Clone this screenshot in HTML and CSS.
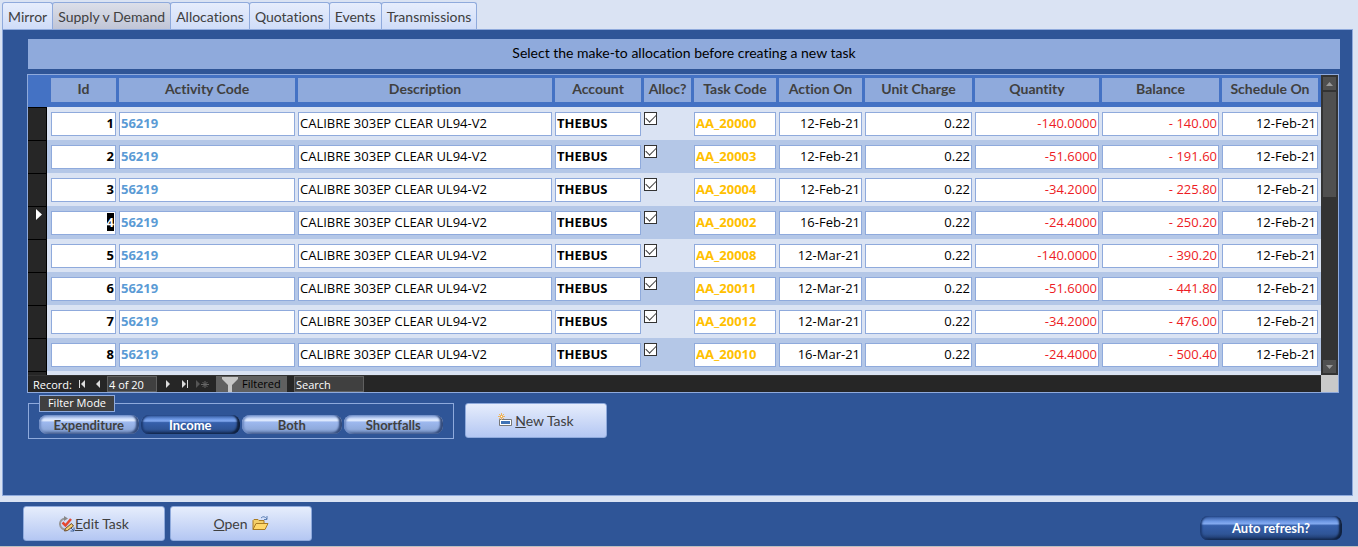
FILE: index.html
```html
<!DOCTYPE html>
<html lang="en">
<head>
<meta charset="utf-8">
<title>Supply v Demand</title>
<link rel="stylesheet" href="styles.css">
</head>
<body>
<main class="workspace">
  <nav class="tabs" role="tablist">
    <button class="tab" role="tab">Mirror</button>
    <button class="tab tab-active" role="tab" aria-selected="true">Supply v Demand</button>
    <button class="tab" role="tab">Allocations</button>
    <button class="tab" role="tab">Quotations</button>
    <button class="tab" role="tab">Events</button>
    <button class="tab" role="tab">Transmissions</button>
  </nav>
  <section class="page">
    <div class="banner">Select the make-to allocation before creating a new task</div>
    <div class="subform">
      <div class="grid-area">
        <div class="grid-view">
          <table class="grid">
            <colgroup>
              <col class="c-sel"><col class="c-id"><col class="c-act"><col class="c-desc"><col class="c-acc"><col class="c-alloc"><col class="c-task"><col class="c-date"><col class="c-unit"><col class="c-qty"><col class="c-bal"><col class="c-sched">
            </colgroup>
            <thead>
              <tr>
                <td></td>
                <th><span>Id</span></th>
                <th><span>Activity Code</span></th>
                <th><span>Description</span></th>
                <th><span>Account</span></th>
                <th><span>Alloc?</span></th>
                <th><span>Task Code</span></th>
                <th><span>Action On</span></th>
                <th><span>Unit Charge</span></th>
                <th><span>Quantity</span></th>
                <th><span>Balance</span></th>
                <th><span>Schedule On</span></th>
              </tr>
            </thead>
            <tbody id="rows"></tbody>
          </table>
        </div>
        <div class="scrollbar">
          <button class="scroll-btn" aria-label="Scroll up"><svg width="7" height="4" viewBox="0 0 7 4"><path d="M0 4 3.5 0 7 4z" fill="#999"/></svg></button>
          <div class="scroll-thumb"></div>
          <button class="scroll-btn scroll-down" aria-label="Scroll down"><svg width="7" height="4" viewBox="0 0 7 4"><path d="M0 0 3.5 4 7 0z" fill="#999"/></svg></button>
        </div>
      </div>
      <div class="record-bar">
        <div class="record-nav">
          <label class="record-label" for="record">Record:</label>
          <button class="nav-btn" aria-label="First record"><svg width="8" height="8" viewBox="0 0 8 8"><path d="M1 0h1v8H1zM7 0 3 4l4 4z" fill="#ddd"/></svg></button>
          <button class="nav-btn nav-prev" aria-label="Previous record"><svg width="5" height="8" viewBox="0 0 5 8"><path d="M4 0v8L0 4z" fill="#ddd"/></svg></button>
          <input class="record-input" id="record" value="4 of 20">
          <button class="nav-btn nav-next" aria-label="Next record"><svg width="5" height="8" viewBox="0 0 5 8"><path d="M0 0v8l4-4z" fill="#ddd"/></svg></button>
          <button class="nav-btn nav-last" aria-label="Last record"><svg width="8" height="8" viewBox="0 0 8 8"><path d="M0 0v8l4-4zM5 0h1v8H5z" fill="#ddd"/></svg></button>
          <button class="nav-btn nav-new" aria-label="New record"><svg width="13" height="9" viewBox="0 0 13 9"><path d="M0 0v8l4-4z" fill="#555"/><path d="M9 1v7M5 4.500h8M6.500 2l5 5M11.500 2l-5 5" stroke="#666" fill="none"/></svg></button>
          <button class="filtered"><svg width="16" height="15" viewBox="0 0 16 15"><path d="M0 0h16v2l-6 6v7H6V8L0 2z" fill="#c6c6c6"/></svg><span>Filtered</span></button>
          <input class="search" aria-label="Search" value="Search">
        </div>
        <div class="corner"></div>
      </div>
    </div>
    <div class="controls">
      <fieldset class="filter">
        <legend>Filter Mode</legend>
        <button class="pill">Expenditure</button>
        <button class="pill pill-dark" aria-pressed="true">Income</button>
        <button class="pill">Both</button>
        <button class="pill">Shortfalls</button>
      </fieldset>
      <button class="action"><svg width="15" height="15" viewBox="0 0 15 15"><path d="M1.500 6.500h12v6h-12z" fill="#fff" stroke="#777"/><path d="M3 8h9v3H3z" fill="#3f72b5"/><path d="M3.500 0v7M0 3.500h7M1 1l5 5M6 1 1 6" stroke="#efb55e"/><path d="M3 3h1v1H3z" fill="#fff"/></svg><span class="gap-left"><u>N</u>ew Task</span></button>
    </div>
  </section>
</main>
<footer class="footer">
  <button class="action"><svg width="16" height="16" viewBox="0 0 16 16"><path d="M7 13.500A5.500 5.500 0 1 1 6 2.500" fill="none" stroke="#999" stroke-width="2"/><path d="m5 0 4 2.500L5 5z" fill="#888"/><path d="m3.500 6.500 3 3L12 3" fill="none" stroke="#e5482f" stroke-width="2.500"/><path d="m6.500 12.500 6-5 2 2.500-6 4.500-3 .500z" fill="#f4cf72" stroke="#6b4a2a"/><path d="m12 12 3 3m0-3.500V15h-3.500" stroke="#3b5f96" fill="none"/></svg><span><u>E</u>dit Task</span></button>
  <button class="action"><span class="gap-right"><u>O</u>pen</span><svg width="17" height="15" viewBox="0 0 17 15"><path d="M1 13.500v-9l1-1h4l1 1h5v3" fill="#f3cf6a" stroke="#a97b22"/><path d="M1 13.500 4 7.500h12l-3 6z" fill="#ffd86b" stroke="#a97b22"/><path d="M9 2q3-3 6 1m0-3v3.500h-3" fill="none" stroke="#5b7fb4"/></svg></button>
  <button class="pill pill-dark refresh">Auto refresh?</button>
</footer>
<script src="app.js"></script>
</body>
</html>
```
FILE: styles.css
```css
* { box-sizing: border-box; }

body {
  margin: 0;
  min-height: 100vh;
  display: flex;
  flex-direction: column;
  background: #dae3f3;
  color: #404040;
  font: 14px/18px Lato, "Open Sans", sans-serif;
  font-variant-ligatures: none;
}

button, input { font: inherit; font-variant-ligatures: none; color: inherit; }
button { padding: 0; border: 0; background: none; }

.workspace { flex: 1; display: flex; flex-direction: column; padding: 2px 5px 6px 2px; }

.tabs { display: flex; }
.tab {
  height: 28px;
  padding: 0 5px;
  border: 1px solid #8faadc;
  border-bottom: 0;
  border-radius: 3px 3px 0 0;
  background: linear-gradient(#e6edfc, #cfdcf8);
}
.tab + .tab { margin-left: -1px; }
.tab-active { background: linear-gradient(#dcdfe9, #bfc4d6); }

.page {
  flex: 1;
  margin-top: -1px;
  padding: 9px 12px 12px 25px;
  border: 1px solid #8faadc;
  background: #2f5597;
}
.banner {
  height: 30px;
  background: #8faadc;
  color: #000;
  text-align: center;
  line-height: 28px;
}

.subform { margin: 5px 1px 0 -1px; border: 1px solid #8faadc; }
.grid-area { display: flex; height: 300px; }
.grid-view { flex: 1; overflow: hidden; background: #dae3f3; }
.grid { width: 100%; table-layout: fixed; border-collapse: collapse; }
.grid td, .grid th { padding: 0 3px 0 0; vertical-align: top; }
.grid thead tr { height: 32px; background: #4472c4; }
.grid thead th { padding-top: 3px; }
.grid th span {
  display: block;
  height: 24px;
  background: #8faadc;
  line-height: 22px;
  font-weight: 700;
}
.grid tbody tr { height: 33px; background: #dae3f3; }
.grid tbody tr:nth-child(even) { background: #b4c7e7; }
.grid tbody td { padding-top: 5px; }
.grid tbody .selector { padding: 0 4px 0 0; }
.selector button {
  display: flex;
  width: 19px;
  height: 33px;
  padding: 2px 0 0 8px;
  border: solid #000;
  border-width: 1px 1px 0 0;
  background: #262626;
}

.c-sel { width: 23px; }
.c-id { width: 68px; }
.c-act { width: 179px; }
.c-acc { width: 89px; }
.c-alloc { width: 50px; }
.c-task { width: 85px; }
.c-date { width: 86px; }
.c-unit { width: 110px; }
.c-qty { width: 127px; }
.c-bal { width: 120px; }
.c-sched { width: 99px; }

.field {
  display: block;
  width: 100%;
  height: 24px;
  padding: 0 1px 3px;
  border: 1px solid #8faadc;
  border-radius: 0;
  outline: 0;
  background: #fff;
  color: #000;
  font-family: "Open Sans", sans-serif;
  font-size: 13px;
}
.field::selection { background: #000; color: #fff; }
.right { text-align: right; }
.bold { font-weight: 700; }
.activity { color: #5b9bd5; font-weight: 700; }
.task { color: #ffc000; font-weight: 700; }
.negative { color: #ed1c24; text-align: right; }

.check {
  appearance: none;
  display: block;
  width: 13px;
  height: 13px;
  margin: 0;
  border: 1px solid #333;
  background: #fff;
}
.check:checked::before {
  content: "";
  display: block;
  width: 9px;
  height: 5px;
  margin: 1px;
  border: solid #404040;
  border-width: 0 0 1px 1px;
  transform: rotate(-45deg);
}

.scrollbar {
  display: flex;
  flex-direction: column;
  gap: 2px;
  width: 17px;
  padding: 2px;
  background: #333;
}
.scroll-btn {
  display: flex;
  align-items: center;
  justify-content: center;
  height: 13px;
  background: #505050;
}
.scroll-thumb { height: 105px; background: #505050; }
.scroll-down { margin-top: auto; }

.record-bar {
  display: flex;
  height: 17px;
  background: #262626;
  color: #fff;
  font-family: "Open Sans", sans-serif;
  font-size: 11px;
  line-height: 15px;
}
.record-nav { flex: 1; display: flex; align-items: center; border-top: 1px solid #333; }
.record-label { width: 50px; padding-left: 5px; }
.nav-btn { display: flex; width: 18px; }
.nav-prev { width: 11px; }
.record-input, .search {
  height: 16px;
  padding: 0 1px;
  border: 1px solid #606060;
  background: #404040;
}
.record-input { width: 50px; }
.nav-next { width: 25px; padding-left: 9px; }
.nav-last { width: 14px; }
.nav-new { width: 20px; }
.filtered {
  display: flex;
  gap: 4px;
  width: 71px;
  height: 16px;
  padding: 1px 0 0 6px;
  background: #606060;
  color: #000;
  line-height: 14px;
}
.search { width: 70px; margin-left: 7px; }
.corner { width: 17px; background: #c9c9c9; }

.controls { display: flex; gap: 11px; align-items: flex-start; padding-top: 2px; }
.filter {
  display: flex;
  gap: 2px;
  width: 426px;
  height: 44px;
  margin: 0;
  padding: 0 10px;
  border: 1px solid #8faadc;
}
.filter legend {
  width: 76px;
  height: 17px;
  margin: 0 auto 0 0;
  padding: 0;
  border: 1px solid #8faadc;
  background: #404040;
  color: #fff;
  font-family: "Open Sans", sans-serif;
  font-size: 11px;
  line-height: 14px;
  text-align: center;
}
.pill {
  height: 19px;
  flex: 1;
  margin-top: 3px;
  border-radius: 8px;
  background: linear-gradient(#7393cf 0, #cfdefb 20%, #e3edff 28%, #9db8ee 38%, #8faadc 75%, #5d76a8 100%);
  box-shadow: inset 2px 0 2px #6f8cc4, inset -3px -1px 2px #344c7c;
  font-size: 13px;
  font-weight: 700;
  line-height: 18px;
}
.pill-dark {
  background: linear-gradient(#2b5196 0, #6d98e4 22%, #83aaf0 32%, #3660ab 40%, #2f5597 75%, #1a3464 100%);
  box-shadow: inset 2px 0 2px #1d3b73, inset -3px -1px 2px #10213f;
  color: #fff;
}
.action {
  display: flex;
  align-items: center;
  justify-content: center;
  width: 142px;
  height: 35px;
  border: 1px solid #8faadc;
  border-radius: 3px;
  background: linear-gradient(#e6edfc, #b4c7f3);
}
.controls .action { margin-top: 8px; }
.gap-left { margin-left: 2px; }
.gap-right { margin-right: 4px; }

.footer {
  display: flex;
  gap: 5px;
  align-items: flex-start;
  height: 45px;
  padding: 4px 16px 0 23px;
  border-bottom: 1px solid #bfbfbf;
  background: #2f5597;
}
.refresh { flex: 0 0 142px; height: 24px; margin: 10px 0 0 auto; line-height: 24px; }
```
FILE: app.js
```js
const rows = [
  [1, "AA_20000", "12-Feb-21", "-140.0000", "- 140.00"],
  [2, "AA_20003", "12-Feb-21", "-51.6000", "- 191.60"],
  [3, "AA_20004", "12-Feb-21", "-34.2000", "- 225.80"],
  [4, "AA_20002", "16-Feb-21", "-24.4000", "- 250.20"],
  [5, "AA_20008", "12-Mar-21", "-140.0000", "- 390.20"],
  [6, "AA_20011", "12-Mar-21", "-51.6000", "- 441.80"],
  [7, "AA_20012", "12-Mar-21", "-34.2000", "- 476.00"],
  [8, "AA_20010", "16-Mar-21", "-24.4000", "- 500.40"]
];
const current = 4;
const marker = '<svg width="6" height="11" viewBox="0 0 6 11"><path d="M0 0v11l6-5.500z" fill="#fff"/></svg>';

const field = (label, kind, value) =>
  `<td><input class="field ${kind}" aria-label="${label}" value="${value}"></td>`;

const selector = (id) =>
  `<td class="selector"><button aria-label="Select record ${id}">${id === current ? marker : ""}</button></td>`;

document.getElementById("rows").innerHTML = rows.map(([id, task, action, quantity, balance]) =>
  "<tr>" + selector(id) +
  field("Id", "right bold", id) +
  field("Activity Code", "activity", "56219") +
  field("Description", "", "CALIBRE 303EP CLEAR UL94-V2") +
  field("Account", "bold", "THEBUS") +
  '<td><input class="check" type="checkbox" aria-label="Alloc?" checked></td>' +
  field("Task Code", "task", task) +
  field("Action On", "right", action) +
  field("Unit Charge", "right", "0.22") +
  field("Quantity", "negative", quantity) +
  field("Balance", "negative", balance) +
  field("Schedule On", "right", "12-Feb-21") +
  "</tr>").join("") + "<tr>" + selector("next") + '<td colspan="11"></td></tr>';

document.querySelectorAll("#rows tr")[current - 1].querySelector(".field").select();
```
